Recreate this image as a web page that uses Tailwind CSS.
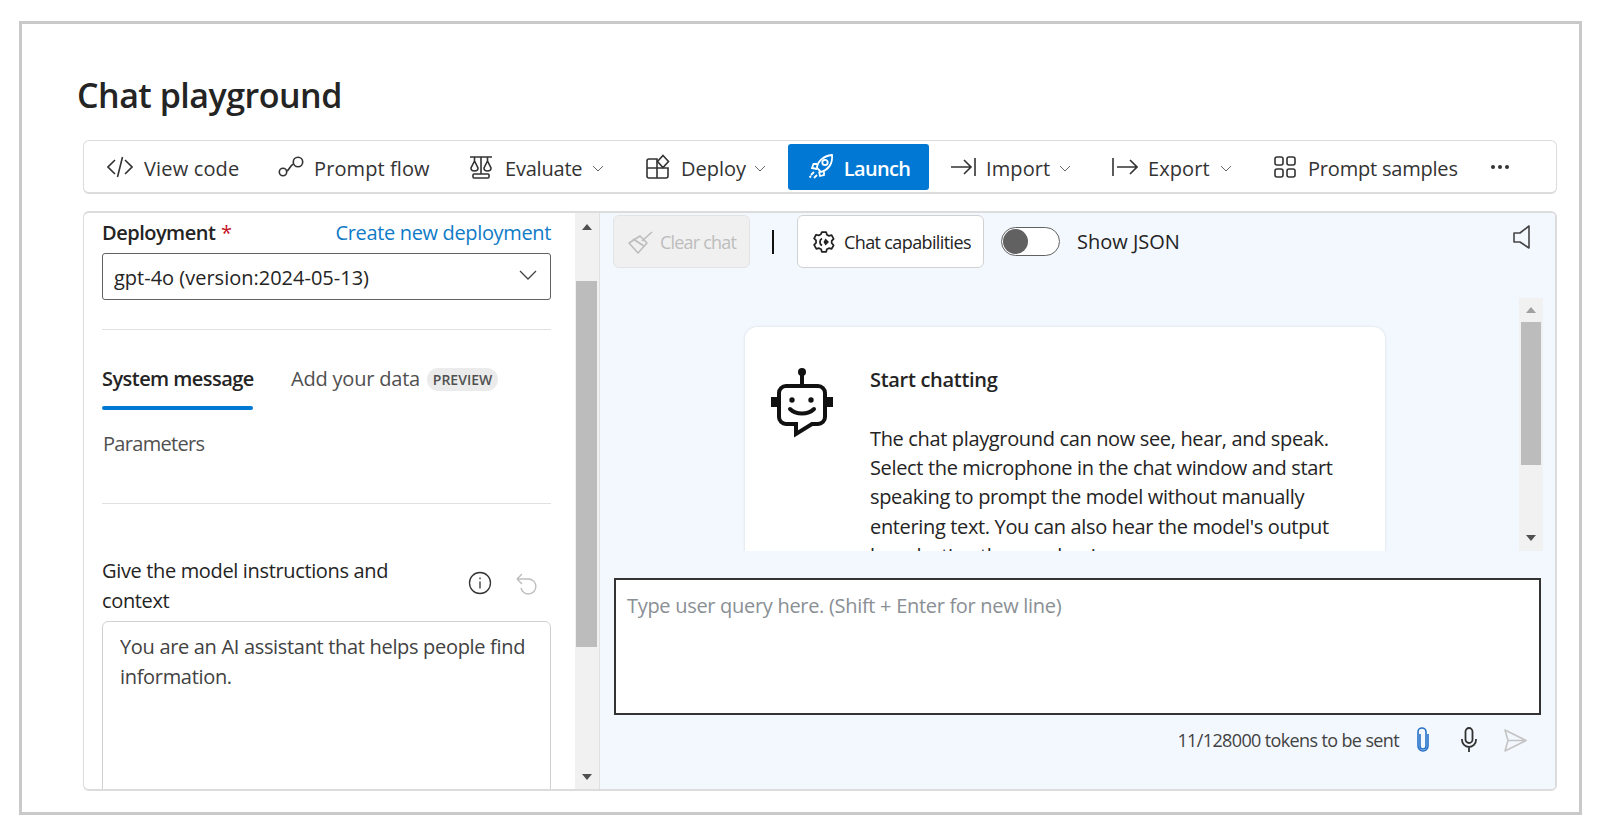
<!DOCTYPE html>
<html lang="en">
<head>
    <meta charset="UTF-8">
    <title>Chat playground</title>
    <script src="https://cdn.jsdelivr.net/npm/@tailwindcss/browser@4"></script>
</head>
<body class="bg-white font-['Open_Sans',sans-serif] text-[#242424] overflow-hidden">
<div class="w-[1600px] h-[835px] pt-[21px] pl-[19px]">
  <div class="w-[1563px] h-[794px] border-[3px] border-[#c9c9c9] bg-white pl-[61px] flex flex-col">

    <h1 class="text-[34px] leading-[46px] font-semibold mt-[48px] -ml-[6px] h-[46px] tracking-[-0.5px]">Chat playground</h1>

    <!-- top toolbar -->
    <div class="w-[1474px] h-[54px] mt-[22px] border border-[#dcdcdc] border-b-2 rounded-md flex items-center pl-[23px] text-[20px] tracking-[-0.2px] text-[#333] shrink-0">
      <div class="w-[171px] flex items-center">
        <svg class="w-[26px] h-[26px]" viewBox="0 0 26 26" fill="none" stroke="#333" stroke-width="1.6"><path d="M8 6l-7 7 7 7M18 6l7 7-7 7M15.500 3l-5 20"/></svg>
        <span class="ml-[11px] mt-[4px] tracking-[0.15px]">View code</span>
      </div>
      <div class="w-[190px] flex items-center">
        <svg class="w-[26px] h-[26px]" viewBox="0 0 26 26" fill="none" stroke="#333" stroke-width="1.6"><circle cx="5" cy="18" r="3.700"/><circle cx="20" cy="8" r="4.700"/><path d="M8.500 17c3.500-1 3-5.500 7-7"/></svg>
        <span class="ml-[10px] mt-[4px] tracking-[0.1px]">Prompt flow</span>
      </div>
      <div class="w-[177px] flex items-center">
        <svg class="w-[26px] h-[26px]" viewBox="0 0 26 26" fill="none" stroke="#333" stroke-width="1.600"><path d="M2 3h22M13 3v17M6.500 3v6M19.500 3v6M6.500 7l-3.500 7c0 4 7 4 7 0zM19.500 7l-3.500 7c0 4 7 4 7 0z"/><rect x="5" y="20" width="16" height="4" rx="1"/></svg>
        <span class="ml-[11px] mt-[4px]">Evaluate</span>
        <svg class="w-[12px] h-[12px] ml-[10px] mt-[3px]" viewBox="0 0 12 12" fill="none" stroke="#666" stroke-width="1"><path d="M1 4l5 5 5-5"/></svg>
      </div>
      <div class="w-[143px] flex items-center">
        <svg class="w-[26px] h-[26px]" viewBox="0 0 26 26" fill="none" stroke="#333" stroke-width="1.600"><path d="M2 7a2 2 0 0 1 2-2h8v9h11v8a2 2 0 0 1-2 2H4a2 2 0 0 1-2-2zM2 14h10v10"/><path d="M18 1.500l5.500 6-5.500 6-5.500-6z"/></svg>
        <span class="ml-[10px] mt-[4px] tracking-[0px]">Deploy</span>
        <svg class="w-[12px] h-[12px] ml-[8px] mt-[3px]" viewBox="0 0 12 12" fill="none" stroke="#666" stroke-width="1"><path d="M1 4l5 5 5-5"/></svg>
      </div>
      <div class="w-[141px] h-[46px] mr-[21px] flex items-center justify-center gap-[9px] bg-[#0078d4] rounded-[3px] text-white font-semibold tracking-[-0.7px]">
        <svg class="w-[28px] h-[28px]" viewBox="0 0 28 28" fill="none" stroke="#fff" stroke-width="1.800"><path d="M10 15C10 9 16 3 25 2c1 9-4 15-11 17z"/><circle cx="18" cy="9.500" r="2.700"/><path d="M10 11H6.500L5 15l5 1M17 18.500V22l-4 1-1-4.500"/><path d="M7 19l-3 3M10 22l-3 3M4 23l-1.500 1.500"/></svg>
        <span class="mt-[4px]">Launch</span>
      </div>
      <div class="w-[162px] flex items-center">
        <svg class="w-[26px] h-[26px]" viewBox="0 0 26 26" fill="none" stroke="#333" stroke-width="1.600"><path d="M1 13h20M14 6l7 7-7 7M25 4v18"/></svg>
        <span class="ml-[10px] mt-[4px] tracking-[0.1px]">Import</span>
        <svg class="w-[12px] h-[12px] ml-[9px] mt-[3px]" viewBox="0 0 12 12" fill="none" stroke="#666" stroke-width="1"><path d="M1 4l5 5 5-5"/></svg>
      </div>
      <div class="w-[161px] flex items-center">
        <svg class="w-[26px] h-[26px]" viewBox="0 0 26 26" fill="none" stroke="#333" stroke-width="1.600"><path d="M1 4v18M5 13h20M18 6l7 7-7 7"/></svg>
        <span class="ml-[10px] mt-[4px] tracking-[0.1px]">Export</span>
        <svg class="w-[12px] h-[12px] ml-[10px] mt-[3px]" viewBox="0 0 12 12" fill="none" stroke="#666" stroke-width="1"><path d="M1 4l5 5 5-5"/></svg>
      </div>
      <div class="w-[218px] flex items-center">
        <svg class="w-[24px] h-[24px]" viewBox="0 0 24 24" fill="none" stroke="#333" stroke-width="1.600"><rect x="2" y="2" width="8" height="8" rx="2"/><rect x="14" y="2" width="8" height="8" rx="2"/><rect x="2" y="14" width="8" height="8" rx="2"/><rect x="14" y="14" width="8" height="8" rx="2"/></svg>
        <span class="ml-[11px] mt-[4px]">Prompt samples</span>
      </div>
      <div class="flex items-center gap-[3px]">
        <span class="w-[4px] h-[4px] rounded-full bg-[#333]"></span>
        <span class="w-[4px] h-[4px] rounded-full bg-[#333]"></span>
        <span class="w-[4px] h-[4px] rounded-full bg-[#333]"></span>
      </div>
    </div>

    <!-- main panel -->
    <div class="w-[1474px] h-[580px] mt-[17px] border border-[#dcdcdc] border-t-2 border-r-2 border-b-2 rounded-md flex overflow-hidden shrink-0">

      <!-- left side -->
      <div class="w-[491px] shrink-0 pl-[18px] pr-[24px] overflow-hidden text-[20px] tracking-[-0.35px]">
        <div class="flex justify-between items-center h-[24px] mt-[8px]">
          <div class="font-semibold tracking-[-0.5px]">Deployment <span class="text-[#c50f1f] ml-[1px] font-normal">*</span></div>
          <div class="text-[#0f7bc7]">Create new deployment</div>
        </div>
        <div class="h-[47px] mt-[8px] border border-[#616161] rounded-[3px] flex items-center justify-between pl-[11px] pr-[12px] tracking-normal">
          <span class="mt-[2px]">gpt-4o (version:2024-05-13)</span>
          <svg class="w-[20px] h-[20px] -mt-[3px]" viewBox="0 0 20 20" fill="none" stroke="#444" stroke-width="1.300"><path d="M2 6l8 8 8-8"/></svg>
        </div>
        <div class="h-px bg-[#e0e0e0] mt-[29px]"></div>

        <div class="flex mt-[33px] h-[47px]">
          <div class="w-[151px] shrink-0 flex flex-col font-semibold tracking-[-0.55px]">
            <span class="h-[32px] leading-[32px] whitespace-nowrap">System message</span>
            <span class="h-[4px] mt-[11px] shrink-0 rounded-sm bg-[#0078d4]"></span>
          </div>
          <div class="ml-[38px] h-[32px] leading-[32px] text-[#505050] tracking-[-0.2px]">Add your data</div>
          <div class="ml-[7px] mt-[5px] w-[71px] h-[23px] text-center rounded-full bg-[#ebebeb] text-[#505050] text-[14px] font-semibold leading-[23px] tracking-normal">PREVIEW</div>
        </div>

        <div class="ml-[1px] mt-[18px] h-[32px] leading-[32px] text-[#505050] tracking-[-0.7px]">Parameters</div>
        <div class="h-px bg-[#e0e0e0] mt-[43px]"></div>

        <div class="flex mt-[52px]">
          <div class="w-[340px] leading-[29.5px]">Give the model instructions and context</div>
          <svg class="w-[24px] h-[24px] ml-[26px] mt-[15px]" viewBox="0 0 24 24" fill="none" stroke="#333" stroke-width="1.300"><circle cx="12" cy="12" r="10.500"/><path d="M12 10.500v7M12 6.500v1.800"/></svg>
          <svg class="w-[24px] h-[24px] ml-[23px] mt-[15px]" viewBox="0 0 24 24" fill="none" stroke="#bdbdbd" stroke-width="1.400"><path d="M2 8l5-5M2 8l5 5M2 8h12a7.500 7.500 0 1 1-8 9"/></svg>
        </div>
        <div class="h-[200px] mt-[6px] border border-[#d1d1d1] rounded-md pl-[17px] pr-[14px] pt-[10px] leading-[29.5px] text-[#424242] tracking-[-0.32px]">You are an AI assistant that helps people find information.</div>
      </div>

      <!-- left scrollbar -->
      <div class="w-[25px] shrink-0 bg-[#f1f1f1] border-r border-[#e0e0e0] flex flex-col items-center relative pr-[1px]">
        <svg class="w-[12px] h-[8px] mt-[10px]" viewBox="0 0 12 8" fill="#505050"><path d="M6 1l5 6H1z"/></svg>
        <div class="w-[21px] h-[366px] mt-[50px] bg-[#bcbcbc]"></div>
        <svg class="w-[12px] h-[8px] absolute bottom-[8px]" viewBox="0 0 12 8" fill="#505050"><path d="M6 7l5-6H1z"/></svg>
      </div>

      <!-- right side -->
      <div class="flex-1 bg-[#f3f8fe] relative">
        <div class="flex items-center h-[53px] mt-[2px] pl-[13px]">
          <div class="w-[137px] h-[53px] rounded-md border border-[#e3e3e3] bg-[#f0f0f0] flex items-center text-[18px] tracking-[-0.8px] text-[#bdbdbd] pl-[13px]">
            <svg class="w-[26px] h-[26px]" viewBox="0 0 26 26" fill="none" stroke="#bdbdbd" stroke-width="1.600" stroke-linejoin="round"><path d="M25 3L15 12M13 7l7 7-9 10-9-10z"/><path d="M6 10l11 7"/></svg>
            <span class="ml-[7px] mt-[2px]">Clear chat</span>
          </div>
          <div class="w-[2px] h-[24px] bg-[#111] ml-[22px]"></div>
          <div class="w-[187px] h-[53px] ml-[23px] rounded-md border border-[#d1d1d1] bg-white flex items-center text-[18px] tracking-[-0.62px] pl-[14px]">
            <svg class="w-[24px] h-[24px]" viewBox="0 0 24 24" fill="none" stroke="#222" stroke-width="2" stroke-linejoin="round"><path d="M9.500 1.500h5l.8 3 2.400 1.300 3-.8 2.300 4.200-2.200 2.300v2.700l2.200 2.300-2.300 4.200-3-.8-2.400 1.300-.8 2.800h-5l-.8-2.800-2.400-1.300-3 .8L.7 16l2.200-2.300V11L.7 8.700 3 4.500l3 .8 2.400-1.300z" transform="translate(1.500 0.800) scale(0.875)"/><path d="M10 8.500a4 4 0 0 0 0 7" stroke-width="1.800"/><path d="M13.500 8.500l3.500 3.500-3.500 3.500-2-3.500z" fill="#222" stroke="none"/></svg>
            <span class="ml-[8px] mt-[2px]">Chat capabilities</span>
          </div>
          <div class="w-[59px] h-[29px] ml-[17px] rounded-full border border-[#616161] bg-white flex items-center pl-[1px]">
            <span class="w-[25px] h-[25px] rounded-full bg-[#616161]"></span>
          </div>
          <div class="ml-[17px] mt-[1px] text-[20px]">Show JSON</div>
          <svg class="w-[20px] h-[26px] absolute right-[23px] top-[11px]" viewBox="0 0 20 26" fill="none" stroke="#444" stroke-width="1.600" stroke-linejoin="round"><path d="M17 2v22L8 18H2V9h6z"/></svg>
        </div>

        <!-- chat scroller -->
        <div class="absolute left-[13px] top-[85px] w-[930px] h-[253px] overflow-hidden flex">
          <div class="w-[906px] pl-[132px] pt-[29px]">
            <div class="w-[640px] h-[260px] bg-white rounded-t-xl shadow-[0_0_3px_rgba(0,0,0,0.12)] flex pl-[26px] pt-[41px]">
              <svg class="w-[62px] h-[70px] shrink-0" viewBox="0 0 62 70" fill="none" stroke="#111" stroke-width="4"><circle cx="31" cy="4" r="4" fill="#111" stroke="none"/><path d="M31 6v11"/><path d="M8 25a7 7 0 0 1 7-7h32a7 7 0 0 1 7 7v24a7 7 0 0 1-7 7H41L25 66V56H15a7 7 0 0 1-7-7z"/><path d="M0 29h7v10H0zM55 29h7v10h-7z" fill="#111" stroke="none"/><path d="M19 41c6 6 18 6 24 0" stroke-linecap="round"/><circle cx="21" cy="32" r="2.700" fill="#111" stroke="none"/><circle cx="40" cy="32" r="2.700" fill="#111" stroke="none"/></svg>
              <div class="ml-[37px] w-[472px] text-[20px] tracking-[-0.35px] leading-[29.3px]">
                <div class="font-semibold -mt-[3px] tracking-[-0.3px]">Start chatting</div>
                <div class="mt-[29.5px]">The chat playground can now see, hear, and speak. Select the microphone in the chat window and start speaking to prompt the model without manually entering text. You can also hear the model's output by selecting the speaker icon.</div>
              </div>
            </div>
          </div>
          <div class="w-[24px] bg-[#f1f1f1] flex flex-col items-center relative">
            <svg class="w-[12px] h-[8px] mt-[8px]" viewBox="0 0 12 8" fill="#a0a0a0"><path d="M6 1l5 6H1z"/></svg>
            <div class="w-[20px] h-[143px] mt-[8px] bg-[#bcbcbc]"></div>
            <svg class="w-[12px] h-[8px] absolute bottom-[9px]" viewBox="0 0 12 8" fill="#505050"><path d="M6 7l5-6H1z"/></svg>
          </div>
        </div>

        <!-- input -->
        <div class="absolute left-[14px] top-[365px] w-[927px] h-[137px] border-2 border-[#333] bg-white pl-[11px] pt-[11px] text-[20px] tracking-[-0.3px] text-[#8a8f94]">Type user query here. (Shift + Enter for new line)</div>

        <div class="absolute right-[27px] top-[512px] h-[30px] flex items-center text-[#424242]">
          <span class="text-[18px] tracking-[-0.63px]">11/128000 tokens to be sent</span>
          <svg class="w-[16px] h-[26px] ml-[16px]" viewBox="0 0 16 26" fill="none" stroke="#2470c9" stroke-width="1.600"><path d="M5 7v12a3 3 0 0 0 6 0V5a4 4 0 0 0-8 0v14a5 5 0 0 0 10 0V7"/></svg>
          <svg class="w-[18px] h-[26px] ml-[29px]" viewBox="0 0 18 26" fill="none" stroke="#333" stroke-width="1.800"><rect x="5.500" y="1" width="7" height="15" rx="3.500"/><path d="M2 12v1a7 7 0 0 0 14 0v-1M9 20v5"/></svg>
          <svg class="w-[25px] h-[25px] ml-[25px]" viewBox="0 0 25 25" fill="none" stroke="#c4c4c4" stroke-width="1.600" stroke-linejoin="round"><path d="M2 2l21 10.500L2 23l3-10.500zM5 12.500h18"/></svg>
        </div>
      </div>
    </div>
  </div>
</div>
</body>
</html>
